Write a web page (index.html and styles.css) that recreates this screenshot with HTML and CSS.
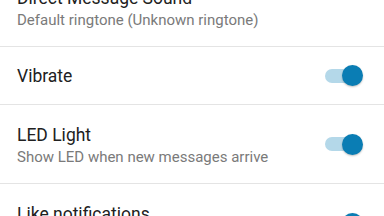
FILE: index.html
```html
<!DOCTYPE html>
<html>
<head>
    <title>Notification settings</title>
    <link rel="stylesheet" href="styles.css">
</head>
<body>
    <div class="prefs">
        <div class="pref two-line">
            <div class="pref-text">
                <p class="pref-title">Direct Message Sound</p>
                <p class="pref-summary">Default ringtone (Unknown ringtone)</p>
            </div>
        </div>

        <div class="pref">
            <div class="pref-text">
                <p class="pref-title">Vibrate</p>
            </div>
            <span class="switch on"><span class="track"></span><span class="thumb"></span></span>
        </div>

        <div class="pref two-line">
            <div class="pref-text">
                <p class="pref-title">LED Light</p>
                <p class="pref-summary">Show LED when new messages arrive</p>
            </div>
            <span class="switch on"><span class="track"></span><span class="thumb"></span></span>
        </div>

        <div class="pref two-line">
            <div class="pref-text">
                <p class="pref-title">Like notifications</p>
                <p class="pref-summary">Notify when someone likes your post</p>
            </div>
            <span class="switch on"><span class="track"></span><span class="thumb"></span></span>
        </div>
    </div>
</body>
</html>
```

FILE: styles.css
```css
body {
    margin: 0;
    background-color: #fff;
    font-family: Roboto, "Noto Sans", sans-serif;
    overflow: hidden;
}

/* list is scrolled a bit, first row is cut off */
.prefs {
    margin-top: -32px;
}

.pref {
    display: flex;
    align-items: center;
    min-height: 57px;
    padding: 0 21px 0 17px;
    border-bottom: 1px solid #e4e4e4;
}

.pref.two-line {
    min-height: 78px;
    align-items: flex-start;
}

.pref.two-line .pref-text {
    padding-top: 20px;
}

.pref.two-line .switch {
    margin-top: 29px;
}

.pref-text {
    flex: 1;
}

.pref-title {
    margin: 0;
    font-size: 17.5px;
    line-height: 20px;
    color: #212121;
}

.pref-summary {
    margin: 2px 0 0;
    font-size: 15px;
    line-height: 20px;
    color: #7a7a7a;
}

/* switch */
.switch {
    position: relative;
    display: inline-block;
    width: 38px;
    height: 20px;
}

.switch .track {
    position: absolute;
    left: 0;
    top: 3px;
    width: 34px;
    height: 14px;
    border-radius: 7px;
    background-color: #b4d8e9;
}

.switch .thumb {
    position: absolute;
    right: 0;
    top: 0;
    width: 21px;
    height: 21px;
    margin-top: -0.5px;
    border-radius: 50%;
    background-color: #0a7db4;
    box-shadow: 0 1px 2px rgba(0, 0, 0, 0.25);
}
```
